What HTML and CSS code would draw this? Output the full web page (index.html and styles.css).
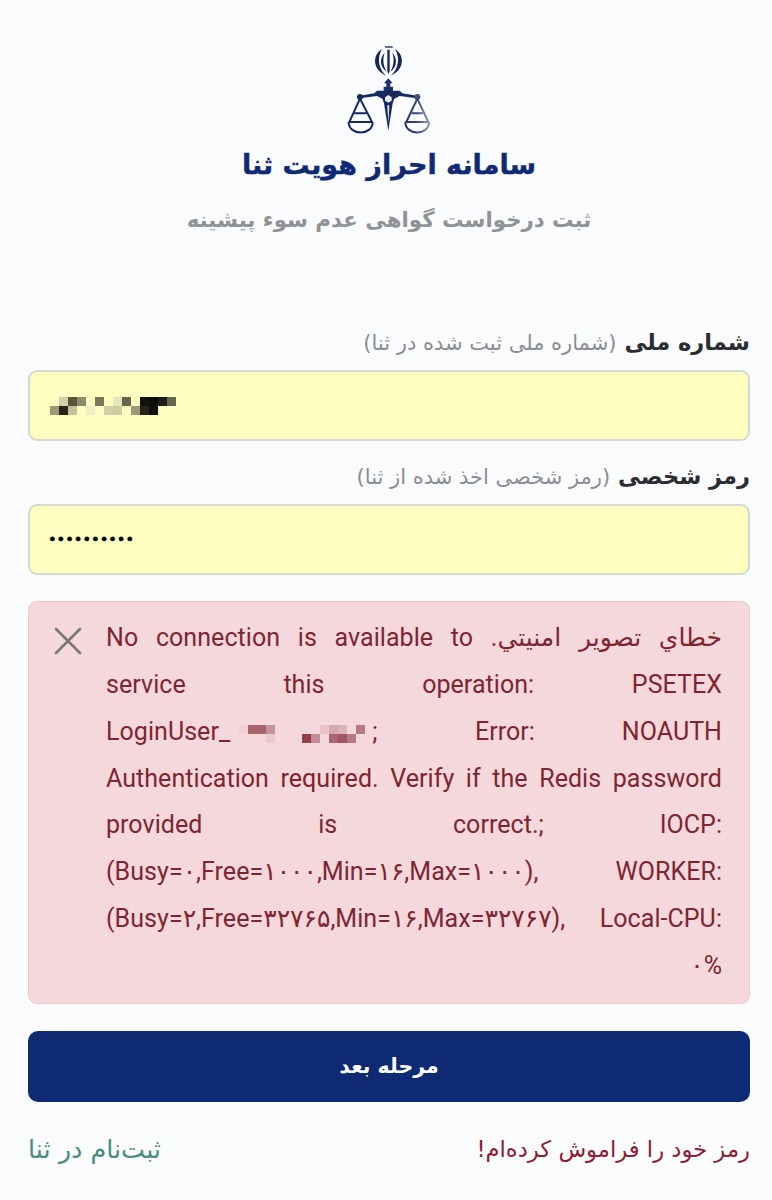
FILE: index.html
```html
<!DOCTYPE html>
<html lang="fa" dir="rtl">
<head>
<meta charset="utf-8">
<title>سامانه احراز هویت ثنا</title>
<link rel="stylesheet" href="styles.css">
</head>
<body>
<main class="page">
  <header class="head">
    <svg class="logo" viewBox="0 0 300 315" width="100" height="105" aria-hidden="true">
      <defs>
        <linearGradient id="fade" x1="0" x2="1" y1="0" y2="0">
          <stop offset="0" stop-color="#24386c"/>
          <stop offset="0.45" stop-color="#33466f"/>
          <stop offset="0.75" stop-color="#66759a"/>
          <stop offset="1" stop-color="#8a94ad"/>
        </linearGradient>
        <g id="wing" fill="#14275c">
          <path d="M129 40C101 55 98 100 141 119C120 101 112 66 129 40z"/>
          <path d="M137 50C121 66 122 92 143 107C133 91 130 69 137 50z"/>
        </g>
      </defs>
      <rect x="138" y="31" width="23" height="4" fill="#14275c"/>
      <path d="M145 41h7v64l-3.500 10l-3.500-10z" fill="#14275c"/>
      <use href="#wing"/>
      <use href="#wing" transform="matrix(-1 0 0 1 297 0)"/>
      <path d="M148 127l13 15h-7v10h8v16h-28v-16h8v-10h-7z" fill="#1c3068"/>
      <path d="M148 164h-34l-8 8-44 7v8l52-7 16 8 5 14 13 82 13-82 5-14 16-8 52 7v-8l-44-7-8-8z" fill="#172a60"/>
      <path d="M148 177l10 7v10l-10 6-10-6v-10z" fill="#e8ebf2"/>
      <path d="M148 206l-3 4 3 52 3-52z" fill="#e8ebf2"/>
      <circle cx="63" cy="183" r="9" fill="#14275c"/>
      <circle cx="235" cy="183" r="9" fill="#3e5180"/>
      <g fill="none" stroke="#16295e" stroke-width="6">
        <path d="M63 188L31 258M63 188L99 258M46 232H82"/>
        <path d="M29 258H101M29 258c0 42 72 42 72 0"/>
      </g>
      <g fill="none" stroke="url(#fade)" stroke-width="6">
        <path d="M235 188L202 258M235 188L268 258M219 232H251"/>
        <path d="M199 258H270M199 258c0 42 71 42 71 0"/>
      </g>
    </svg>
    <h1 class="title">سامانه احراز هویت ثنا</h1>
    <p class="subtitle">ثبت درخواست گواهی عدم سوء پیشینه</p>
  </header>

  <form class="form">
    <div class="group">
      <label class="label" for="nid">شماره ملی <span class="hint">(شماره ملی ثبت شده در ثنا)</span></label>
      <div class="field">
        <input class="input" id="nid" type="text" dir="ltr">
        <svg class="mosaic" viewBox="0 0 14 2" width="126" height="18" shape-rendering="crispEdges" aria-hidden="true">
          <rect x="1" y="0" width="1" height="1" fill="#d2d2a6"/>
          <rect x="2" y="0" width="1" height="1" fill="#56563f"/>
          <rect x="3" y="0" width="1" height="1" fill="#8c8c68"/>
          <rect x="5" y="0" width="1" height="1" fill="#77775a"/>
          <rect x="7" y="0" width="1" height="1" fill="#e6e6bb"/>
          <rect x="8" y="0" width="1" height="1" fill="#66664c"/>
          <rect x="10" y="0" width="1" height="1" fill="#111"/>
          <rect x="11" y="0" width="1" height="1" fill="#0c0c0c"/>
          <rect x="12" y="0" width="1" height="1" fill="#1c1c18"/>
          <rect x="13" y="0" width="1" height="1" fill="#66664c"/>
          <rect x="0" y="1" width="1" height="1" fill="#9b9b76"/>
          <rect x="1" y="1" width="1" height="1" fill="#24241c"/>
          <rect x="2" y="1" width="1" height="1" fill="#c2c298"/>
          <rect x="4" y="1" width="1" height="1" fill="#efefc6"/>
          <rect x="6" y="1" width="1" height="1" fill="#cfcfa2"/>
          <rect x="7" y="1" width="1" height="1" fill="#cdcd9e"/>
          <rect x="9" y="1" width="1" height="1" fill="#9a9a76"/>
          <rect x="10" y="1" width="1" height="1" fill="#24241c"/>
          <rect x="11" y="1" width="1" height="1" fill="#0e0e0e"/>
        </svg>
      </div>
    </div>
    <div class="group group-second">
      <label class="label" for="pwd">رمز شخصی <span class="hint">(رمز شخصی اخذ شده از ثنا)</span></label>
      <div class="field">
        <input class="input input-pwd" id="pwd" type="password" dir="ltr" value="0123456789">
      </div>
    </div>

    <div class="alert" role="alert">
      <button class="close" type="button" aria-label="بستن">
        <svg viewBox="0 0 28 28" width="28" height="28" aria-hidden="true"><path d="M2 2L26 26M26 2L2 26" stroke="#777" stroke-width="2.6" stroke-linecap="round" fill="none"/></svg>
      </button>
      <p class="alert-text">خطاي تصوير امنيتي. No connection is available to service this operation: PSETEX <span class="token" dir="ltr">LoginUser_<svg class="redact" viewBox="0 0 16 2" width="144" height="18" shape-rendering="crispEdges" aria-hidden="true"><rect x="1" y="0" width="1" height="1" fill="#f0d0d4"/><rect x="2" y="0" width="1" height="1" fill="#a9646e"/><rect x="3" y="0" width="1" height="1" fill="#a9646e"/><rect x="4" y="0" width="1" height="1" fill="#c7949b"/><rect x="4" y="1" width="1" height="1" fill="#ecc9cd"/><rect x="8" y="1" width="1" height="1" fill="#93404b"/><rect x="9" y="1" width="1" height="1" fill="#c38b92"/><rect x="10" y="0" width="1" height="1" fill="#e8c0c5"/><rect x="11" y="0" width="1" height="1" fill="#d4a8ae"/><rect x="12" y="0" width="1" height="1" fill="#dbb4ba"/><rect x="11" y="1" width="1" height="1" fill="#a9646e"/><rect x="12" y="1" width="1" height="1" fill="#9e5560"/><rect x="13" y="1" width="1" height="1" fill="#b57a83"/><rect x="14" y="0" width="1" height="1" fill="#b57a83"/></svg>;</span> Error: NOAUTH Authentication required. Verify if the Redis password provided is correct.; IOCP: (Busy=۰,Free=۱۰۰۰,Min=۱۶,Max=۱۰۰۰), WORKER: (Busy=۲,Free=۳۲۷۶۵,Min=۱۶,Max=۳۲۷۶۷), Local-CPU: ۰%</p>
    </div>

    <button class="submit" type="button">مرحله بعد</button>

    <nav class="links">
      <a class="link link-forgot" href="#">رمز خود را فراموش کرده‌ام!</a>
      <a class="link link-signup" href="#">ثبت‌نام در ثنا</a>
    </nav>
  </form>
</main>
</body>
</html>
```

FILE: styles.css
```css
* { box-sizing: border-box; }
html, body { margin: 0; padding: 0; }
body {
  background: #fafbfd;
  font-family: "DejaVu Sans", "Noto Sans", sans-serif;
  color: #2b2d31;
}
.page { width: 772px; height: 1200px; padding: 36px 22px 0 28px; overflow: hidden; }
.head { display: flex; flex-direction: column; align-items: center; }
.logo { display: block; }
.title { margin: 2px 0 0; font-size: 27px; line-height: 44px; font-weight: 700; color: #0f2a72; -webkit-text-stroke: 0.4px #0f2a72; }
.subtitle { margin: 15px 0 0; font-size: 21.300px; line-height: 36px; font-weight: 700; color: #8f9398; }
.form { display: flex; flex-direction: column; margin-top: 86px; }
.group { display: flex; flex-direction: column; gap: 9px; }
.group-second { margin-top: 17px; }
.label { font-size: 22.500px; line-height: 36px; font-weight: 700; color: #2b2d31; }
.hint { font-size: 21px; font-weight: 400; color: #8a8d93; }
.field { position: relative; height: 71px; }
.input {
  width: 100%; height: 100%;
  padding: 0 18px 3px;
  background: #fdfdbf;
  border: 2px solid #d6d8d2;
  border-radius: 9px;
  font-family: "DejaVu Sans", sans-serif;
  font-size: 14.600px;
  color: #000;
  outline: none;
  -webkit-text-stroke: 0.6px #000;
}
.mosaic { position: absolute; left: 22px; top: 27px; }
.alert {
  position: relative;
  margin-top: 26px;
  height: 403px;
  padding: 13px 27px 0 27px;
  background: #f4d8db;
  border: 1px solid #f0c8cd;
  border-radius: 9px;
}
.close {
  position: absolute; left: 25px; top: 25px;
  padding: 0; border: 0; background: none; line-height: 0;
}
.alert-text {
  margin: 0 0 0 50px;
  font-family: Roboto, "DejaVu Sans", sans-serif;
  font-size: 25px;
  line-height: 46.850px;
  letter-spacing: 0.05px;
  color: #7f2530;
  text-align: justify;
}
.token { display: inline-block; width: 282px; white-space: nowrap; }
.redact { vertical-align: -3px; margin-right: -2px; }
.submit {
  margin-top: 27px;
  height: 71px;
  padding-bottom: 3px;
  border: 0;
  border-radius: 10px;
  background: #0d2a73;
  color: #fff;
  font-family: "DejaVu Sans", sans-serif;
  font-size: 20.500px;
  font-weight: 700;
}
.links { display: flex; justify-content: space-between; margin-top: 27px; }
.link { font-size: 22.700px; line-height: 40px; text-decoration: none; }
.link-forgot { color: #8e1c35; }
.link-signup { font-size: 25.500px; color: #4a8b82; }
```
